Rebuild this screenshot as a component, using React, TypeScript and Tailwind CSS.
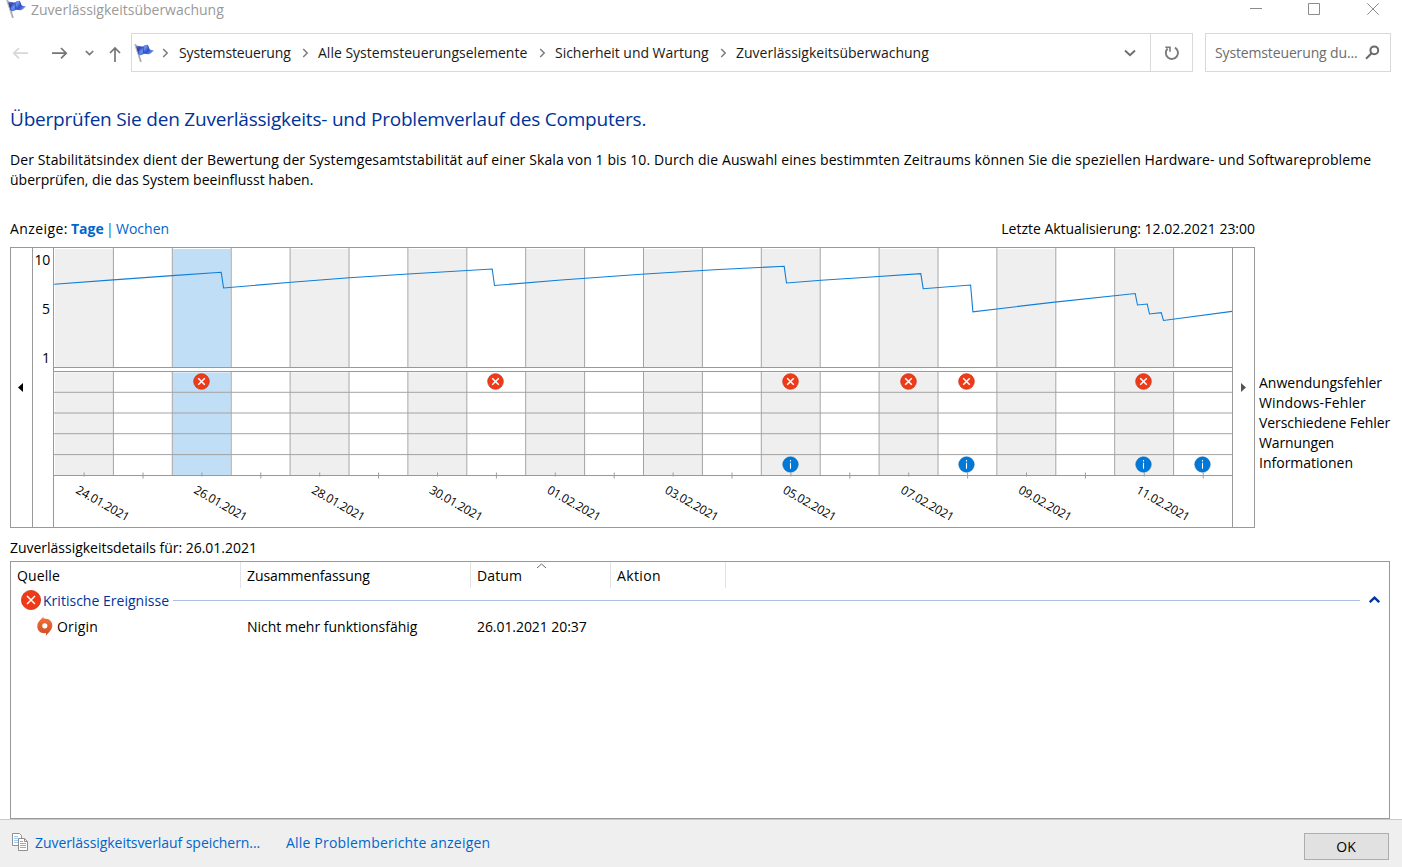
import React from "react";

const COL_W = 58.9;
const ROWS = [371.5, 392.3, 413, 433.7, 454.6, 475.5].map((y) => y - 247);
const DATES = [
  "24.01.2021", "26.01.2021", "28.01.2021", "30.01.2021", "01.02.2021",
  "03.02.2021", "05.02.2021", "07.02.2021", "09.02.2021", "11.02.2021",
];
const ERRORS = [2, 7, 12, 14, 15, 18];
const INFOS = [12, 15, 18, 19];
const SELECTED = 2;

const STABILITY: [number, number][] = [
  [0, 37.3], [59, 32.9], [118, 28.6], [167, 25.3], [169.4, 41], [237, 35.2], [295, 30.8],
  [354, 27], [438, 22], [440.3, 38.5], [507, 33], [587, 27.2], [660, 22.8], [730, 19.3],
  [732.3, 36], [767, 33.3], [817, 30], [866.6, 26.6], [869, 41.7], [916.4, 38], [918.7, 64.8],
  [996, 55.6], [1081, 46.5], [1083.3, 58], [1093, 57], [1095.3, 67], [1107, 65.7],
  [1109.3, 73.5], [1178, 64.4],
];

function Flag({ className }: { className: string }) {
  return (
    <svg className={className} width="21" height="20" viewBox="0 0 21 20">
      <defs>
        <linearGradient id="flagFill" x1="0" y1="0" x2="1" y2="0.5">
          <stop offset="0" stopColor="#8f9fd8" />
          <stop offset="0.3" stopColor="#2b45b4" />
          <stop offset="0.5" stopColor="#6d93f0" />
          <stop offset="0.75" stopColor="#2c4fd2" />
          <stop offset="1" stopColor="#7392ea" />
        </linearGradient>
      </defs>
      <path d="M1.2 1.2L6.9 18.8" stroke="#9a9a9a" strokeWidth="1.7" />
      <path d="M0.8 1.2L6.3 18" stroke="#d5d5d5" strokeWidth="0.6" />
      <path d="M1.8 2.6C4 2 6 4 8.4 3.4C10.6 2.8 11.4 1.6 13.6 1.8L15.2 6C16.6 7.2 18.2 7.2 20 7.2C18.4 9 16.8 10.9 14.6 11.2C12.8 11.4 11.4 10.4 9.6 11C8 11.6 6.8 12.8 4.9 12Z" fill="url(#flagFill)" />
      <path d="M3 4L5.2 11.5M8.8 4L10.2 10.4M13.6 2.2L15.2 6.4" stroke="#1b2f8c" strokeWidth="1" opacity="0.6" fill="none" />
    </svg>
  );
}

function Crumb() {
  return (
    <svg width="7" height="10" viewBox="0 0 7 10" fill="none" stroke="#7c7c7c" strokeWidth="1.5">
      <path d="M1.2 1L5.2 5L1.2 9" />
    </svg>
  );
}

function ErrorMark({ x, y, r }: { x: number; y: number; r: number }) {
  const d = r * 0.4;
  return (
    <g>
      <circle cx={x} cy={y} r={r - 0.4} fill="#f03a17" stroke="#c9361a" strokeWidth="0.8" />
      <path d={`M${x - d} ${y - d}L${x + d} ${y + d}M${x + d} ${y - d}L${x - d} ${y + d}`} stroke="#fff" strokeWidth="1.5" />
    </g>
  );
}

function InfoMark({ x, y }: { x: number; y: number }) {
  return (
    <g>
      <circle cx={x} cy={y} r="7.8" fill="#0078d7" stroke="#1768b0" strokeWidth="0.5" />
      <path d={`M${x} ${y - 1.8}V${y + 4.2}M${x} ${y - 4.4}V${y - 3}`} stroke="#fff" strokeWidth="1.1" />
    </g>
  );
}

function Chart() {
  return (
    <svg width="1178" height="279" viewBox="0.5 1 1178 279" className="block shrink-0">
      {Array.from({ length: 20 }, (_, i) => {
        const fill = i === SELECTED ? "#c0def5" : i % 2 === 0 ? "#efefef" : "#ffffff";
        const x = i * COL_W;
        return (
          <g key={i}>
            <rect x={x + 1.5} y="2" width={COL_W - 1} height="118" fill={fill} />
            <rect x={x + 1.5} y="125.5" width={COL_W - 1} height="102.5" fill={fill} />
          </g>
        );
      })}
      <g stroke="#a3a3a3" strokeWidth="1">
        {Array.from({ length: 19 }, (_, i) => (
          <path key={i} d={`M${(i + 1) * COL_W + 1} 1V120.5M${(i + 1) * COL_W + 1} 124.5V228.5`} />
        ))}
        {ROWS.slice(1, 5).map((y) => (
          <path key={y} d={`M0 ${y}H1180`} />
        ))}
      </g>
      <path d="M0 120.5H1180M0 124.5H1180M0 228.5H1180" stroke="#999" strokeWidth="1" />
      {Array.from({ length: 20 }, (_, i) => (
        <path key={i} d={`M${i * COL_W + 30.6} 225.5V${i % 2 ? 231.5 : 229.5}`} stroke="#9c9c9c" strokeWidth="1" />
      ))}
      <polyline points={STABILITY.map(([x, y]) => `${x + 0.7},${y}`).join(" ")} fill="none" stroke="#0f7fd8" strokeWidth="1.1" />
      {ERRORS.map((i) => (
        <ErrorMark key={i} x={Math.round(i * COL_W + 29.9)} y={134.5} r={8.2} />
      ))}
      {INFOS.map((i) => (
        <InfoMark key={i} x={Math.round(i * COL_W + 29.9)} y={217.5} />
      ))}
      {DATES.map((d, i) => (
        <text
          key={d}
          transform={`translate(${i * COL_W * 2 + 21.6} 245.6) rotate(29.5)`}
          fontSize="12"
          textLength="59"
          className="fill-black"
        >
          {d}
        </text>
      ))}
    </svg>
  );
}

function TitleBar() {
  return (
    <header className="flex h-[33px] items-start">
      <Flag className="ml-[6px] -mt-px" />
      <h1 className="ml-1 text-sm leading-5 text-[#999999]">Zuverlässigkeitsüberwachung</h1>
      <svg className="ml-auto mr-[22px] mt-[2px]" width="130" height="14" viewBox="0 0 130 14" fill="none" stroke="#8c8c8c">
        <path d="M0 6.5H12" />
        <path d="M58.5 1.5H69.5V12.5H58.5Z" />
        <path d="M117.3 1.3L128.7 12.7M128.7 1.3L117.3 12.7" />
      </svg>
    </header>
  );
}

function Navigation() {
  return (
    <nav className="flex h-[39px] text-sm text-[#1a1a1a]">
      <svg width="131" height="39" viewBox="0 33 131 39" fill="none" strokeWidth="1.7" className="shrink-0">
        <path d="M28 53.2H14M19 48L13.8 53.2L19 58.4" stroke="#d8d8d8" />
        <path d="M52 53.2H66M61 48L66.2 53.2L61 58.4" stroke="#757575" />
        <path d="M85.8 51L89.5 54.6L93.2 51" stroke="#767676" />
        <path d="M115 62V48M110 53L115 48L120 53" stroke="#757575" />
      </svg>
      <div className="flex w-[1062px] items-center border border-[#d9d9d9]">
        <Flag className="ml-[2px]" />
        <div className="ml-[7px] flex items-center"><Crumb /></div>
        <span className="ml-[10px] w-[112px] whitespace-nowrap tracking-[-0.13px]">Systemsteuerung</span>
        <div className="ml-[11px]"><Crumb /></div>
        <span className="ml-[9px] w-[210px] whitespace-nowrap">Alle Systemsteuerungselemente</span>
        <div className="ml-[11px]"><Crumb /></div>
        <span className="ml-[9px] w-[154px] whitespace-nowrap tracking-[-0.03px]">Sicherheit und Wartung</span>
        <div className="ml-[11px]"><Crumb /></div>
        <span className="ml-[9px] whitespace-nowrap">Zuverlässigkeitsüberwachung</span>
        <svg className="ml-auto mr-[14px]" width="12" height="8" viewBox="0 0 12 8" fill="none" stroke="#6e6e6e" strokeWidth="1.9">
          <path d="M1 1.5L6 6.3L11 1.5" />
        </svg>
        <div className="flex h-full w-[42px] items-center justify-center border-l border-[#d9d9d9]">
          <svg width="16" height="16" viewBox="0 0 16 16" fill="none" stroke="#7a7a7a" strokeWidth="1.9">
            <path d="M11 2.6A6.1 6.1 0 1 1 3.6 3.5" />
            <path d="M1.3 2.2H6V6.8" strokeWidth="1.6" />
          </svg>
        </div>
      </div>
      <div className="ml-3 flex w-[186px] items-center border border-[#d9d9d9] pl-[9px] text-[#6d6d6d]">
        <span className="whitespace-nowrap tracking-[-0.14px]">Systemsteuerung du...</span>
        <svg className="ml-auto mr-[10px]" width="15" height="15" viewBox="0 0 15 15" fill="none" stroke="#6a6a6a" strokeWidth="2">
          <circle cx="9.3" cy="5.3" r="3.9" />
          <path d="M6.6 8.2L1 13.8" />
        </svg>
      </div>
    </nav>
  );
}

function ReliabilityPanel() {
  return (
    <section className="ml-[10px] flex">
      <div className="flex h-[281px] w-[1245px] border border-[#999999]">
        <div className="flex w-[22px] items-center border-r border-[#999999] pl-[7px]">
          <svg width="5" height="9" viewBox="0 0 5 9"><path d="M5 0V9L0 4.5Z" fill="#000" /></svg>
        </div>
        <div className="flex w-[21px] flex-col items-end border-r border-[#999999] pr-[3px] pt-[2px] text-sm leading-5">
          <span className="tracking-[-0.2px]">10</span>
          <span className="mt-[29px]">5</span>
          <span className="mt-[29px]">1</span>
        </div>
        <Chart />
        <div className="flex flex-1 items-center border-l border-[#999999] pl-[8px]">
          <svg width="5" height="9" viewBox="0 0 5 9"><path d="M0 0V9L5 4.5Z" fill="#555" /></svg>
        </div>
      </div>
      <ul className="ml-1 mt-[126px] text-sm leading-5">
        <li>Anwendungsfehler</li>
        <li className="tracking-[0.15px]">Windows-Fehler</li>
        <li className="tracking-[-0.08px]">Verschiedene Fehler</li>
        <li className="tracking-[-0.13px]">Warnungen</li>
        <li>Informationen</li>
      </ul>
    </section>
  );
}

function Details() {
  return (
    <section className="ml-[10px] mr-3 h-[258px] border border-[#999999] text-sm leading-5">
      <div className="flex h-[26px] items-center pt-[2px]">
        <span className="w-[229px] pl-[6px] tracking-[0.12px]">Quelle</span>
        <span className="-mt-[2px] flex h-[26px] w-[230px] items-center border-l border-[#e2e2e2] pl-[6px] pt-[2px] tracking-[-0.09px]">Zusammenfassung</span>
        <span className="-mt-[2px] flex h-[26px] w-[140px] items-center border-l border-[#e2e2e2] pl-[6px] pt-[2px] tracking-[0.1px]">
          Datum
          <svg className="mb-[21px] ml-[14px]" width="11" height="6" viewBox="0 0 11 6" fill="none" stroke="#666" strokeWidth="1">
            <path d="M1 5L5.5 1L10 5" />
          </svg>
        </span>
        <span className="-mt-[2px] flex h-[26px] w-[116px] items-center border-x border-[#e2e2e2] pl-[6px] pt-[2px] tracking-[0.35px]">Aktion</span>
      </div>
      <div className="flex h-[25px] items-start text-[#003399]">
        <svg className="ml-[10px] mt-[2px]" width="20" height="20" viewBox="0 0 20 20"><ErrorMark x={10} y={10} r={10} /></svg>
        <span className="ml-[2px] mt-[3px] w-[130px] tracking-[0.02px]">Kritische Ereignisse</span>
        <div className="mt-[12px] h-px w-[1187px] bg-[#aebfe2]" />
        <svg className="ml-[9px] mt-[8px]" width="11" height="7" viewBox="0 0 11 7" fill="none" stroke="#003399" strokeWidth="2.3">
          <path d="M0.8 6.2L5.5 1.6L10.2 6.2" />
        </svg>
      </div>
      <div className="flex h-[28px] items-center">
        <svg className="mb-[2px] ml-[25px]" width="18" height="20" viewBox="0 0 18 20">
          <defs>
            <linearGradient id="originFill" x1="0" y1="0" x2="0" y2="1">
              <stop offset="0" stopColor="#f4743b" />
              <stop offset="1" stopColor="#cf4a20" />
            </linearGradient>
          </defs>
          <path fill="url(#originFill)" fillRule="evenodd" d="M7.8 0.3C7.4 1.2 7.3 1.9 7.4 2.6C12.6 2.2 16.4 5.1 16.3 9.6C16.2 14.6 12 16.7 10.2 19.8C9.8 19.3 9.9 18 10 17.1C5 17.8 1.2 14.8 1.3 10.2C1.3 5.3 5.4 3.7 7.8 0.3ZM8.8 7.2A2.6 2.6 0 1 0 8.8 12.4A2.6 2.6 0 1 0 8.8 7.2Z" />
        </svg>
        <span className="ml-[3px] w-[190px] tracking-[0.2px]">Origin</span>
        <span className="w-[230px]">Nicht mehr funktionsfähig</span>
        <span className="tracking-[-0.07px]">26.01.2021 20:37</span>
      </div>
    </section>
  );
}

function Footer() {
  return (
    <footer className="flex h-12 border-t border-[#c9c9c9] bg-[#efefef] text-sm leading-5 text-[#0066cc]">
      <svg className="ml-3 mt-[13px]" width="16" height="18" viewBox="0 0 16 18" fill="#fff" stroke="#8f8f8f">
        <path d="M0.5 0.5H7.5L9.5 2.5V12.5H0.5Z" />
        <path d="M2 3.5H6M2 5.5H7M2 7.5H6M2 9.5H6" stroke="#a5c8f5" />
        <path d="M6.5 5.5H12.5L15.5 8.5V17.5H6.5Z" />
        <path d="M12.5 5.5V8.5H15.5" fill="none" />
        <path d="M8 8.5H11M8 10.5H14M8 12.5H14M8 14.5H14" stroke="#83b0ef" />
      </svg>
      <a className="ml-[7px] mt-[13px] w-[251px] tracking-[-0.06px]">Zuverlässigkeitsverlauf speichern...</a>
      <a className="mt-[13px] tracking-[0.19px]">Alle Problemberichte anzeigen</a>
      <button className="ml-auto mr-[13px] mt-[13px] h-[27px] w-[85px] border border-[#adadad] bg-[#e1e1e1] pr-px text-sm leading-[25px] text-black">OK</button>
    </footer>
  );
}

export default function App() {
  return (
    <div className="flex h-[867px] w-[1402px] flex-col overflow-hidden bg-white font-['Open_Sans','Noto_Sans',sans-serif] text-black">
      <TitleBar />
      <Navigation />
      <h2 className="ml-[10px] mt-[33px] text-[19px] leading-7 tracking-[-0.21px] text-[#003399]">
        Überprüfen Sie den Zuverlässigkeits- und Problemverlauf des Computers.
      </h2>
      <p className="ml-[10px] mt-[17px] whitespace-nowrap text-sm leading-5">
        <span className="tracking-[0.1px]">
          Der Stabilitätsindex dient der Bewertung der Systemgesamtstabilität auf einer Skala von 1 bis 10. Durch die Auswahl eines bestimmten Zeitraums können Sie die speziellen Hardware- und Softwareprobleme
        </span>
        <br />
        überprüfen, die das System beeinflusst haben.
      </p>
      <div className="ml-[10px] mt-[29px] flex h-[28px] w-[1245px] text-sm leading-5">
        <span className="w-[61px] tracking-[0.4px]">Anzeige:</span>
        <b className="w-[35px] text-[#0066cc]">Tage</b>
        <span className="w-[10px] text-[#0066cc]">|</span>
        <span className="text-[#0066cc]">Wochen</span>
        <span className="ml-auto tracking-[-0.02px]">Letzte Aktualisierung: 12.02.2021 23:00</span>
      </div>
      <ReliabilityPanel />
      <p className="ml-[10px] mt-[10px] h-[23px] text-sm leading-5 tracking-[-0.02px]">Zuverlässigkeitsdetails für: 26.01.2021</p>
      <Details />
      <Footer />
    </div>
  );
}
